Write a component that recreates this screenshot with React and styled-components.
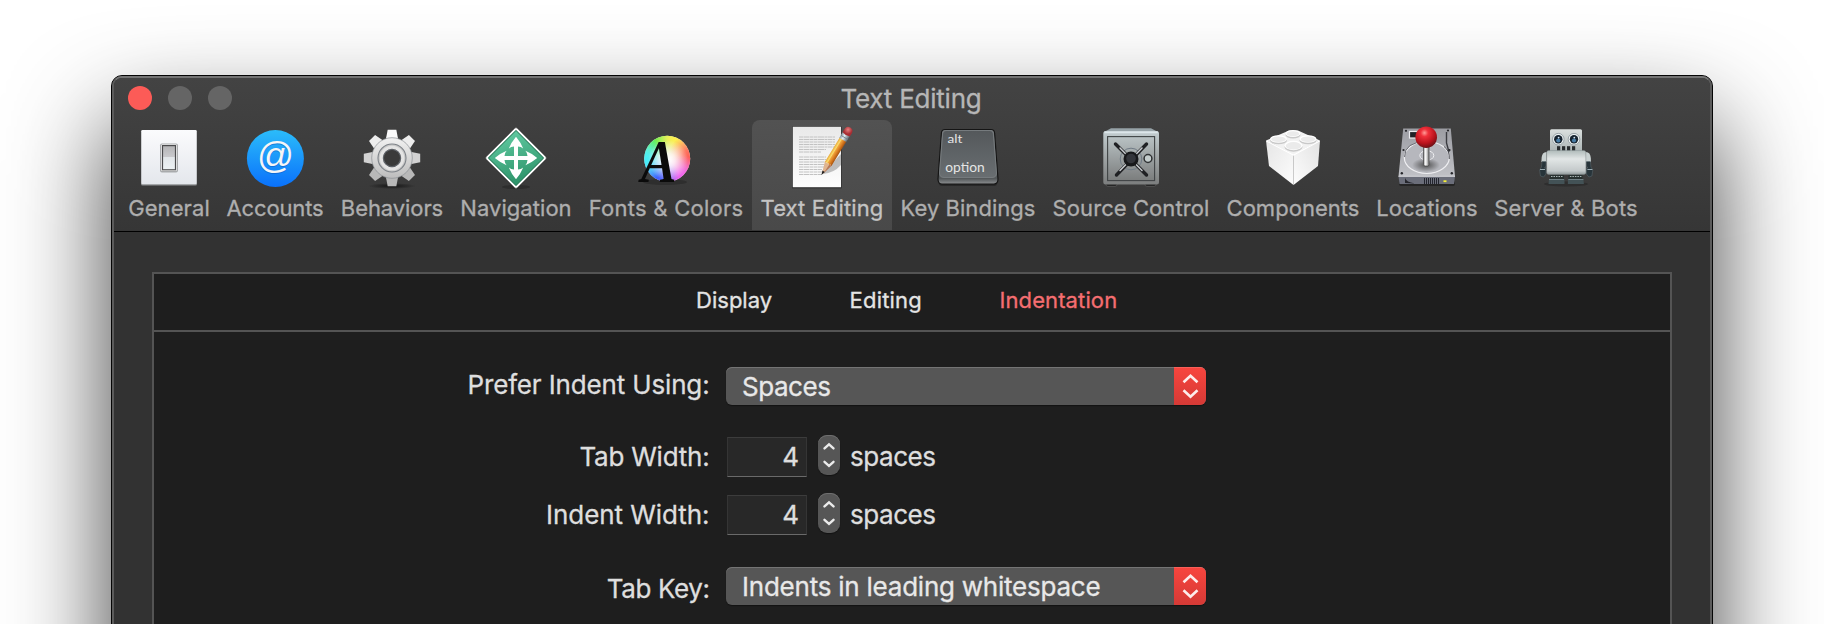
import React from 'react';
import styled, { createGlobalStyle } from 'styled-components';

const GlobalStyle = createGlobalStyle`
  *, *::before, *::after { box-sizing: border-box; }
  html, body { margin: 0; background: #fff; overflow: hidden; }
  body { font-family: Inter, "Liberation Sans", sans-serif; }
`;

const Desktop = styled.div`
  width: 1824px;
  height: 624px;
  padding: 75px 111px 0;
  overflow: hidden;
  background: #fff;
`;

const Window = styled.div`
  height: 700px;
  border: 1px solid #050505;
  border-radius: 11px;
  background: #5c5c5c;
  box-shadow: 0 50px 100px rgba(0, 0, 0, 0.76);
  -webkit-text-stroke-width: 0.3px;
`;

const Frame = styled.div`
  height: 100%;
  border: 2px solid #5b5b5b;
  border-top-color: #747474;
  border-radius: 10px;
  overflow: hidden;
  background: #323232;
`;

const Header = styled.header`
  height: 154px;
  border-bottom: 1px solid #000;
  background: linear-gradient(#434343, #363636);
`;

const TitleBar = styled.div`
  display: grid;
  grid-template-columns: 1fr auto 1fr;
  height: 42px;
  padding: 4px 16px 0 14px;
`;

const Lights = styled.div`
  display: flex;
  gap: 16px;
  padding-top: 4px;
`;

const Light = styled.span`
  width: 24px;
  height: 24px;
  border-radius: 50%;
  background: ${(p) => p.$color};
`;

const Title = styled.h1`
  margin: 0;
  padding-top: 1px;
  font-size: 26px;
  line-height: 32px;
  font-weight: 400;
  letter-spacing: -0.22px;
  color: #b6b6b6;
`;

const Toolbar = styled.nav`
  display: flex;
  padding-left: 6px;
`;

const Tool = styled.button`
  display: flex;
  flex-direction: column;
  align-items: center;
  flex: none;
  width: ${(p) => p.$width}px;
  height: 110px;
  padding: 4px 0 0;
  border: 0;
  border-radius: 8px 8px 0 0;
  background: ${(p) => (p.$active ? 'linear-gradient(#525252, #494949)' : 'none')};
  color: ${(p) => (p.$active ? '#c4c4c4' : '#aeaeae')};
  font: inherit;
`;

const ToolLabel = styled.span`
  margin-top: 7px;
  font-size: 22px;
  line-height: 26px;
  letter-spacing: ${(p) => p.$spacing}px;
  white-space: nowrap;
`;

const Icon = styled.svg`
  display: block;
  flex: none;
  width: 64px;
  height: 64px;
  overflow: visible;
  -webkit-text-stroke-width: 0;
`;

const Body = styled.main`
  padding: 40px 38px;
`;

const Panel = styled.section`
  height: 500px;
  border: 2px solid #545454;
  background: #1e1e1e;
`;

const Tabs = styled.div`
  display: flex;
  gap: 77.4px;
  height: 58px;
  padding: 13px 0 0 542px;
  border-bottom: 2px solid #545454;
`;

const Tab = styled.span`
  font-size: 22px;
  line-height: 26px;
  letter-spacing: ${(p) => p.$spacing}px;
  color: ${(p) => (p.$active ? '#f56e71' : '#e4e4e4')};
`;

const Form = styled.div`
  padding-top: 35px;
`;

const Row = styled.div`
  display: grid;
  grid-template-columns: 555.5px auto;
  column-gap: 16.5px;
  justify-content: start;
  height: ${(p) => p.$height}px;
  margin-bottom: ${(p) => p.$after || 0}px;
`;

const Label = styled.label`
  padding-top: ${(p) => p.$drop}px;
  text-align: right;
  font-size: 26px;
  line-height: 32px;
  letter-spacing: ${(p) => p.$spacing}px;
  color: #dedede;
`;

const Select = styled.div`
  display: flex;
  justify-content: space-between;
  width: 480px;
  height: 38px;
  border-radius: 6px;
  overflow: hidden;
  background: #565656;
  box-shadow: inset 0 1px 0 #747474, 0 1px 1px rgba(0, 0, 0, 0.4);
`;

const SelectValue = styled.span`
  padding: 4px 0 0 16px;
  font-size: 26px;
  line-height: 32px;
  letter-spacing: ${(p) => p.$spacing}px;
  color: #e8e8e8;
`;

const SelectArrows = styled.span`
  width: 32px;
  height: 38px;
  background: linear-gradient(#f8453e, #d53a36);
  box-shadow: inset 0 1px 0 rgba(255, 255, 255, 0.14);
`;

const Glyph = styled.svg`
  display: block;
`;

const NumberGroup = styled.div`
  display: flex;
  align-items: flex-start;
`;

const NumberField = styled.span`
  width: 80px;
  height: 40px;
  margin: 2px 11px 0 1px;
  padding: 3px 7px 0 0;
  border: 1px solid #353535;
  border-top-color: #3c3c3c;
  border-bottom-color: #6a6a6a;
  background: #282828;
  color: #dedede;
  font-size: 26px;
  line-height: 32px;
  text-align: right;
`;

const Stepper = styled.span`
  width: 22px;
  height: 40px;
  border-radius: 9px;
  background: #565656;
  box-shadow: inset 0 1px 0 #6e6e6e, 0 1px 1px rgba(0, 0, 0, 0.4);
`;

const Unit = styled.span`
  margin-left: 10px;
  padding-top: 6px;
  font-size: 26px;
  line-height: 32px;
  letter-spacing: -0.44px;
  color: #dedede;
`;

const GeneralIcon = () => (
  <Icon viewBox="0 0 64 64">
    <defs>
      <linearGradient id="plate" x2="0" y2="1">
        <stop offset="0" stopColor="#fbfbfd" />
        <stop offset="1" stopColor="#e4e7ec" />
      </linearGradient>
      <linearGradient id="rocker" x2="0" y2="1">
        <stop offset="0" stopColor="#b4b4b6" />
        <stop offset=".46" stopColor="#c9c9cc" />
        <stop offset=".48" stopColor="#e2e6e9" />
        <stop offset="1" stopColor="#edf2f4" />
      </linearGradient>
    </defs>
    <rect x="4" y="6" width="56" height="55.4" rx="1.5" fill="#8f9193" />
    <rect x="4.4" y="6" width="55.2" height="54.2" rx="1.2" fill="url(#plate)" />
    <rect x="23" y="19.5" width="18" height="29" rx="2" fill="#a9abad" />
    <rect x="24.2" y="20.4" width="15.6" height="26.6" rx="1" fill="#fff" />
    <rect x="25.5" y="21.6" width="13" height="24.2" fill="url(#rocker)" stroke="#4b4b4d" strokeWidth="1.2" />
  </Icon>
);

const AccountsIcon = () => (
  <Icon viewBox="0 0 64 64">
    <defs>
      <linearGradient id="at" x2="0" y2="1">
        <stop offset="0" stopColor="#2bbcfa" />
        <stop offset="1" stopColor="#0a71fb" />
      </linearGradient>
    </defs>
    <circle cx="32.4" cy="34.5" r="28.5" fill="url(#at)" />
    <text x="32.6" y="45.2" textAnchor="middle" fontFamily="Liberation Sans, sans-serif" fontSize="36.5" fill="#0a55b8" opacity=".5">@</text>
    <text x="32.6" y="44.2" textAnchor="middle" fontFamily="Liberation Sans, sans-serif" fontSize="36.5" fill="#f6f6f6">@</text>
  </Icon>
);

const BehaviorsIcon = () => (
  <Icon viewBox="0 0 64 64">
    <defs>
      <linearGradient id="gear" gradientUnits="userSpaceOnUse" x1="0" y1="-28" x2="0" y2="28">
        <stop offset="0" stopColor="#fbfbfb" />
        <stop offset="1" stopColor="#b3b3b3" />
      </linearGradient>
      <radialGradient id="gearShadow">
        <stop offset="0" stopColor="#111" stopOpacity=".9" />
        <stop offset="1" stopColor="#111" stopOpacity="0" />
      </radialGradient>
    </defs>
    <ellipse cx="32" cy="62" rx="24" ry="3" fill="url(#gearShadow)" />
    <g transform="translate(32 34)">
      <g>
        {[[0, '#fafafa'], [45, '#ededed'], [315, '#ededed'], [90, '#d2d2d2'], [270, '#d2d2d2'], [135, '#b8b8b8'], [225, '#b8b8b8'], [180, '#b9b9b9']].map(([a, fill]) => (
          <path key={a} transform={`rotate(${a})`} d="M-6.5-17L-4.3-28.2H4.3L6.5-17z" fill={fill} />
        ))}
      </g>
      <circle r="20.3" fill="url(#gear)" stroke="#8b8f94" strokeWidth=".7" />
      <circle r="14" fill="#c9c9c9" stroke="#7d8288" strokeWidth="1.1" />
      <circle r="10.8" fill="none" stroke="#e4e4e4" strokeWidth="3" />
      <circle r="8.6" fill="#3a3a3a" stroke="#5c6066" strokeWidth="1.2" />
    </g>
  </Icon>
);

const NavigationIcon = () => (
  <Icon viewBox="0 0 64 64">
    <defs>
      <linearGradient id="sign" gradientUnits="userSpaceOnUse" x1="-8" y1="-26" x2="8" y2="26">
        <stop offset="0" stopColor="#5fc9a0" />
        <stop offset="1" stopColor="#2c9168" />
      </linearGradient>
    </defs>
    <ellipse cx="32" cy="63" rx="14" ry="2" fill="#222" opacity=".5" />
    <g transform="translate(32 34)">
      <rect x="-22" y="-22" width="44" height="44" rx="2" transform="rotate(45)" fill="#fff" stroke="#222" strokeWidth=".5" />
      <rect x="-20" y="-20" width="40" height="40" rx="1" transform="rotate(45)" fill="#2b7d5c" />
      <path d="M0-27L27 0L0 27L-27 0z" fill="url(#sign)" />
      {[0, 90, 180, 270].map((a) => (
        <path key={a} transform={`rotate(${a})`} d="M-2 1V-11.5Q-5-11.3-7.2-9.4Q-4.8-15.5 0-21.2Q4.8-15.5 7.2-9.4Q5-11.3 2-11.5V1z" fill="#fff" />
      ))}
    </g>
  </Icon>
);

const wheel = [
  ['green', 22, 16, '#58f04c'],
  ['yellow', 42, 14, '#fff04a'],
  ['red', 57, 33, '#ff5a4c'],
  ['magenta', 47, 54, '#f05cf0'],
  ['blue', 22, 54, '#3c58ff'],
  ['cyan', 10, 36, '#3cf0f8'],
];

const FontsIcon = () => (
  <Icon viewBox="0 0 64 64">
    <defs>
      {wheel.map(([name, cx, cy, color]) => (
        <radialGradient key={name} id={name} gradientUnits="userSpaceOnUse" cx={cx} cy={cy} r="23">
          <stop offset="0" stopColor={color} />
          <stop offset=".35" stopColor={color} stopOpacity=".8" />
          <stop offset="1" stopColor={color} stopOpacity="0" />
        </radialGradient>
      ))}
      <radialGradient id="core">
        <stop offset="0" stopColor="#fff" />
        <stop offset=".35" stopColor="#fff" stopOpacity=".75" />
        <stop offset="1" stopColor="#fff" stopOpacity="0" />
      </radialGradient>
    </defs>
    <ellipse cx="31" cy="58" rx="22" ry="3" fill="#222" opacity=".5" />
    <circle cx="33.2" cy="34.8" r="23" fill="#f4e6e8" />
    {wheel.map(([name]) => (
      <circle key={name} cx="33.2" cy="34.8" r="23" fill={`url(#${name})`} />
    ))}
    <circle cx="34" cy="36" r="20" fill="url(#core)" />
    <text x="7" y="58" fontFamily="Liberation Serif, serif" fontWeight="700" fontStyle="italic" fontSize="61" textLength="35.5" lengthAdjust="spacingAndGlyphs" fill="#0b0b0b">A</text>
  </Icon>
);

const paperLines = [13, 15.5, 18, 20.5, 23, 25.5, 28, 33, 35.5, 38, 40.5, 43, 45.5, 48, 50.5];

const TextEditingIcon = () => (
  <Icon viewBox="0 0 64 64">
    <defs>
      <linearGradient id="paper" x2="0" y2="1">
        <stop offset="0" stopColor="#e9e9e9" />
        <stop offset="1" stopColor="#fdfdfd" />
      </linearGradient>
      <linearGradient id="pencil" x2="1" y2="0">
        <stop offset="0" stopColor="#e8a93a" />
        <stop offset=".3" stopColor="#fbdc6c" />
        <stop offset=".42" stopColor="#f0a43c" />
        <stop offset=".7" stopColor="#d87a20" />
        <stop offset="1" stopColor="#a4520f" />
      </linearGradient>
      <linearGradient id="ferrule" x2="1" y2="0">
        <stop offset="0" stopColor="#8a9aa4" />
        <stop offset=".4" stopColor="#e4eef3" />
        <stop offset="1" stopColor="#5f6c75" />
      </linearGradient>
      <radialGradient id="rubber" cx=".4" cy=".35">
        <stop offset="0" stopColor="#e98080" />
        <stop offset="1" stopColor="#a72e33" />
      </radialGradient>
    </defs>
    <rect x="2" y="2.4" width="49.8" height="62" fill="#222" opacity=".6" />
    <rect x="2.8" y="2.8" width="48.2" height="60.4" fill="url(#paper)" />
    {paperLines.map((y) => (
      <line key={y} x1="9" x2={y === 28 ? 31 : y > 45 ? 32 : y > 25 ? 36 : 45} y1={y} y2={y} stroke="#c2c2c2" strokeWidth="1" strokeDasharray="4 .5 6 .5 3 .5" />
    ))}
    <path d="M33 50L48 33L51 30V41Q44 49 33 50z" fill="#777" opacity=".45" />
    <g transform="translate(31.7 50.5) rotate(31.4)">
      <path d="M0 0L-3.900-12.500H3.900z" fill="#e0b48f" />
      <path d="M.9-1L1.400-12.500H3.900z" fill="#b5795a" />
      <path d="M0 .5L-1.400-3.800H1.400z" fill="#222" />
      <path d="M-3.900-12Q-2.600-14-1.300-12Q0-14 1.300-12Q2.600-14 3.900-12V-41H-3.900z" fill="url(#pencil)" />
      <rect x="-4.100" y="-47.500" width="8.200" height="7" fill="url(#ferrule)" />
      <path d="M-4.100-43.500H4.100" stroke="#6f7d87" strokeWidth=".8" />
      <path d="M-4.200-47V-51Q-4-55 0-55Q4-55 4.200-51V-47Q0-45.500-4.200-47z" fill="url(#rubber)" />
    </g>
  </Icon>
);

const KeyBindingsIcon = () => (
  <Icon viewBox="0 0 64 64">
    <defs>
      <linearGradient id="keySide" x2="0" y2="1">
        <stop offset="0" stopColor="#75797c" />
        <stop offset=".9" stopColor="#54585a" />
        <stop offset="1" stopColor="#8d9092" />
      </linearGradient>
      <linearGradient id="keyTop" x2="0" y2="1">
        <stop offset="0" stopColor="#54585b" />
        <stop offset="1" stopColor="#696e71" />
      </linearGradient>
    </defs>
    <rect x="3" y="56" width="58" height="6" rx="3" fill="#1c1c1c" opacity=".6" />
    <path d="M9 5.500H55Q58.300 5.500 58.600 9L62 55Q62 60 58 60H6Q2 60 2 55L5.400 9Q5.700 5.500 9 5.500z" fill="url(#keySide)" stroke="#151515" strokeWidth="1.200" />
    <path d="M10 6.500H54Q57 6.500 57.300 9.500L60.500 49Q60.500 53.500 56 53.500H8Q3.500 53.500 3.500 49L6.700 9.500Q7 6.500 10 6.500z" fill="url(#keyTop)" stroke="#7b8083" strokeWidth=".8" />
    <text x="11.500" y="18.700" fontFamily="Lato, sans-serif" fontSize="11.500" textLength="14.800" lengthAdjust="spacingAndGlyphs" fill="#e4e4e4">alt</text>
    <text x="9.300" y="48" fontFamily="Lato, sans-serif" fontSize="12.500" textLength="39.500" lengthAdjust="spacingAndGlyphs" fill="#e4e4e4">option</text>
  </Icon>
);

const SourceControlIcon = () => (
  <Icon viewBox="0 0 64 64">
    <defs>
      <linearGradient id="safe" x2="0" y2="1">
        <stop offset="0" stopColor="#c3ced1" />
        <stop offset=".5" stopColor="#9fa4a5" />
        <stop offset="1" stopColor="#7c7e7e" />
      </linearGradient>
      <linearGradient id="door" x2="0" y2="1">
        <stop offset="0" stopColor="#b9c2c4" />
        <stop offset="1" stopColor="#7b7d7d" />
      </linearGradient>
    </defs>
    <rect x="7" y="58" width="11" height="4.500" rx="2" fill="#262626" stroke="#606060" strokeWidth=".6" />
    <rect x="46" y="58" width="11" height="4.500" rx="2" fill="#262626" stroke="#606060" strokeWidth=".6" />
    <path d="M12 4.300H52L59 8H5z" fill="#97a3a8" />
    <rect x="4.300" y="7" width="55.700" height="53.500" rx="2.500" fill="url(#safe)" />
    <path d="M5.500 8.300H58.800" stroke="#dce6ea" strokeWidth="1.800" />
    <rect x="8.600" y="12.600" width="47" height="44" fill="url(#door)" stroke="#404446" strokeWidth="1.100" />
    <circle cx="32" cy="35" r="10.800" fill="none" stroke="#707b86" strokeWidth="1" />
    <g strokeLinecap="round">
      <path d="M16.500 20L47.500 51M47.500 20L17.500 51" stroke="#202124" strokeWidth="3.400" />
      <path d="M21 24L43 46.500M43 24L21 46.500" stroke="#c7cbcf" strokeWidth="1.500" />
    </g>
    <circle cx="32" cy="35" r="7.500" fill="#17181b" />
    <circle cx="32" cy="34.500" r="4.800" fill="#33353b" />
    <circle cx="49" cy="34.500" r="3.900" fill="#c3cccc" stroke="#303335" strokeWidth="1.500" />
  </Icon>
);

const ComponentsIcon = () => (
  <Icon viewBox="0 0 64 64">
    <defs>
      <linearGradient id="brickL" x2="1" y2="1">
        <stop offset="0" stopColor="#e6e6e6" />
        <stop offset="1" stopColor="#fcfcfc" />
      </linearGradient>
      <linearGradient id="brickR" x1="1" x2="0" y2="1">
        <stop offset="0" stopColor="#e2e2e2" />
        <stop offset="1" stopColor="#fdfdfd" />
      </linearGradient>
    </defs>
    <path d="M5 16.500L28 6.500H37L59 16.500L32.500 31z" fill="#f2f2f2" />
    <path d="M5 16.500L32.500 30.500V61L8 42z" fill="url(#brickL)" />
    <path d="M59 16.500L32.500 30.500V61L57 42z" fill="url(#brickR)" />
    <path d="M5.500 17L32.500 31L58.500 17" fill="none" stroke="#fff" strokeWidth="1.200" />
    {[[32, 9.5, 7.5, 3.5], [17.5, 15, 8.5, 3.8], [47, 15, 8.5, 3.8], [32.5, 21.5, 9, 4.7]].map(([x, y, rx, ry]) => (
      <g key={x + y}>
        <ellipse cx={x} cy={y + 1.5} rx={rx} ry={ry} fill="#c9c9c9" />
        <ellipse cx={x} cy={y} rx={rx} ry={ry} fill="#fff" />
        <ellipse cx={x} cy={y + 0.3} rx={rx - 1.2} ry={ry - 1} fill="#ebebeb" />
      </g>
    ))}
  </Icon>
);

const LocationsIcon = () => (
  <Icon viewBox="0 0 64 64">
    <defs>
      <linearGradient id="drive" x2="0" y2="1">
        <stop offset="0" stopColor="#9c9da3" />
        <stop offset="1" stopColor="#c0c1c6" />
      </linearGradient>
      <radialGradient id="ball" cx=".42" cy=".3" r=".7">
        <stop offset="0" stopColor="#ff9c98" />
        <stop offset=".25" stopColor="#f0303a" />
        <stop offset=".7" stopColor="#b9121c" />
        <stop offset="1" stopColor="#6d1015" />
      </radialGradient>
      <radialGradient id="stickShadow">
        <stop offset="0" stopColor="#444" stopOpacity=".9" />
        <stop offset="1" stopColor="#444" stopOpacity="0" />
      </radialGradient>
      <linearGradient id="stick" x2="1" y2="0">
        <stop offset="0" stopColor="#999" />
        <stop offset=".4" stopColor="#fff" />
        <stop offset="1" stopColor="#777" />
      </linearGradient>
    </defs>
    <rect x="4" y="57" width="56" height="5" rx="2" fill="#1c1c1c" opacity=".7" />
    <path d="M8.200 4.500H55.800L60 52.500H3.500z" fill="url(#drive)" />
    <path d="M3.500 52H60L59 60H4.500z" fill="#6b6e7a" />
    <path d="M3.500 52.300H60" stroke="#dcdce0" strokeWidth="1" />
    <path d="M10 54V59L20 59.500Q11 58 10 54z" fill="#25262c" />
    <path d="M29.500 54V60M31.500 54V60M33.500 54V60M35.500 54V60M37.500 54V60M39.500 54V60M41.500 54V60M43.500 54V60" stroke="#23252e" strokeWidth="1" />
    <rect x="48.500" y="56.300" width="3" height="1.800" fill="#f5ef38" />
    <ellipse cx="31.800" cy="33.500" rx="22.500" ry="16" fill="#b6b7bd" stroke="#efeff2" strokeWidth="1.200" />
    <path d="M9.500 33Q9.500 18 31 17.500" fill="none" stroke="#6d6e74" strokeWidth="1" />
    <path d="M54.300 35Q55 27 49 22.500" fill="none" stroke="#55565c" strokeWidth="1" />
    <ellipse cx="31.800" cy="31.500" rx="7" ry="4.800" fill="none" stroke="#efeff2" strokeWidth="1" />
    <ellipse cx="31" cy="41" rx="14" ry="7" fill="url(#stickShadow)" />
    <rect x="14.500" y="7.500" width="8" height="6.500" fill="#202126" stroke="#ececef" strokeWidth="1.200" />
    <path d="M51.500 8V19L54 28" fill="none" stroke="#3a3b40" strokeWidth="1.400" />
    <g fill="#26272b">
      <circle cx="11" cy="6.800" r="1.100" />
      <circle cx="53" cy="6.500" r="1.100" />
      <circle cx="8.500" cy="26" r="1.100" />
      <circle cx="54.500" cy="26" r="1.100" />
      <circle cx="6.800" cy="49.300" r="1.200" />
      <circle cx="56.800" cy="49.300" r="1.200" />
    </g>
    <rect x="28.500" y="22" width="5.500" height="20" rx="1.500" fill="url(#stick)" stroke="#444" strokeWidth=".7" />
    <circle cx="31.200" cy="13.200" r="10.800" fill="url(#ball)" />
  </Icon>
);

const BotsIcon = () => (
  <Icon viewBox="0 0 64 64">
    <defs>
      <linearGradient id="botHead" x2="0" y2="1">
        <stop offset="0" stopColor="#dbe0df" />
        <stop offset="1" stopColor="#a9b2b2" />
      </linearGradient>
      <linearGradient id="botBody" x2="0" y2="1">
        <stop offset="0" stopColor="#b0bbba" />
        <stop offset=".35" stopColor="#e2e6e6" />
        <stop offset=".85" stopColor="#c3c9ca" />
        <stop offset="1" stopColor="#8f9899" />
      </linearGradient>
    </defs>
    <ellipse cx="32" cy="60" rx="22" ry="2.500" fill="#222" opacity=".5" />
    <rect x="16" y="5.200" width="32" height="23.500" rx="1.500" fill="url(#botHead)" />
    {[24.3, 40].map((x) => (
      <g key={x}>
        <circle cx={x} cy="15.200" r="5.800" fill="#edf2f2" stroke="#89949a" strokeWidth=".8" />
        <circle cx={x} cy="15.200" r="4.200" fill="#16232f" />
        <circle cx={x} cy="16.500" r="2.100" fill="#467ba4" />
        <circle cx={x + 0.3} cy="13.600" r=".9" fill="#d4e6f5" />
      </g>
    ))}
    {[23, 28, 33, 38].map((x) => (
      <rect key={x} x={x} y="22.200" width="3.200" height="4.600" fill="#282c2e" />
    ))}
    {[0, 1].map((side) => (
      <g key={side} transform={side ? 'translate(64.400 0) scale(-1 1)' : undefined}>
        <path d="M12.500 28Q8 28 7.600 34L7.400 38H12.500z" fill="#c9d1d1" />
        <path d="M8 37.500H12V42L10.500 44H12V50L9.500 53L6.500 52L5.600 46L7.500 43z" fill="#27343a" stroke="#5d6b71" strokeWidth=".5" />
        <path d="M6 45.500H11" stroke="#9babb2" strokeWidth="1.200" />
        <rect x="16" y="51" width="14" height="4" fill="#26302f" />
        <path d="M17 52.500H29" stroke="#a9b4b4" strokeWidth="1.200" strokeDasharray="1.500 1" />
        <path d="M15 55H30.500V60H14.500z" fill="#435256" />
        <path d="M15 55.500H30" stroke="#7d8d92" strokeWidth=".8" />
      </g>
    ))}
    <rect x="12.700" y="26.500" width="39.200" height="24" rx="2" fill="url(#botBody)" stroke="#7f898a" strokeWidth=".4" />
  </Icon>
);

const tools = [
  { label: 'General', width: 98, spacing: 0.1, Art: GeneralIcon },
  { label: 'Accounts', width: 114, spacing: -0.12, Art: AccountsIcon },
  { label: 'Behaviors', width: 120, spacing: -0.08, Art: BehaviorsIcon },
  { label: 'Navigation', width: 128, spacing: 0.05, Art: NavigationIcon },
  { label: 'Fonts & Colors', width: 172, spacing: 0.25, Art: FontsIcon },
  { label: 'Text Editing', width: 140, spacing: 0.1, Art: TextEditingIcon, active: true },
  { label: 'Key Bindings', width: 152, spacing: 0.04, Art: KeyBindingsIcon },
  { label: 'Source Control', width: 174, spacing: 0.08, Art: SourceControlIcon },
  { label: 'Components', width: 150, spacing: 0.03, Art: ComponentsIcon },
  { label: 'Locations', width: 118, spacing: 0.03, Art: LocationsIcon },
  { label: 'Server & Bots', width: 160, spacing: 0.18, Art: BotsIcon },
];

const PopUp = ({ children, spacing }) => (
  <Select>
    <SelectValue $spacing={spacing}>{children}</SelectValue>
    <SelectArrows>
      <Glyph width="32" height="38" fill="none" stroke="#fdeceb" strokeWidth="2.600">
        <path d="M9.500 15.200L16.500 8.700L23.500 15.200M9.500 23.300L16.500 29.800L23.500 23.300" />
      </Glyph>
    </SelectArrows>
  </Select>
);

const NumberInput = ({ value }) => (
  <NumberGroup>
    <NumberField>{value}</NumberField>
    <Stepper>
      <Glyph width="22" height="40" fill="none" stroke="#ebebeb" strokeWidth="2.400" strokeLinecap="round">
        <path d="M6.500 13.400L11 9.300L15.500 13.400M6.500 26.800L11 30.900L15.500 26.800" />
      </Glyph>
    </Stepper>
    <Unit>spaces</Unit>
  </NumberGroup>
);

export default function App() {
  return (
    <>
      <GlobalStyle />
      <Desktop>
        <Window>
          <Frame>
            <Header>
              <TitleBar>
                <Lights>
                  <Light $color="#fc5b57" />
                  <Light $color="#656565" />
                  <Light $color="#656565" />
                </Lights>
                <Title>Text Editing</Title>
              </TitleBar>
              <Toolbar>
                {tools.map(({ label, width, spacing, Art, active }) => (
                  <Tool key={label} $width={width} $active={active}>
                    <Art />
                    <ToolLabel $spacing={spacing}>{label}</ToolLabel>
                  </Tool>
                ))}
              </Toolbar>
            </Header>
            <Body>
              <Panel>
                <Tabs>
                  <Tab $spacing={0.02}>Display</Tab>
                  <Tab $spacing={0.2}>Editing</Tab>
                  <Tab $spacing={0.12} $active>Indentation</Tab>
                </Tabs>
                <Form>
                  <Row $height={38} $after={30}>
                    <Label $drop={2} $spacing={-0.15}>Prefer Indent Using:</Label>
                    <PopUp spacing={-0.45}>Spaces</PopUp>
                  </Row>
                  <Row $height={42} $after={16}>
                    <Label $drop={6} $spacing={-0.22}>Tab Width:</Label>
                    <NumberInput value="4" />
                  </Row>
                  <Row $height={42} $after={32}>
                    <Label $drop={6} $spacing={-0.06}>Indent Width:</Label>
                    <NumberInput value="4" />
                  </Row>
                  <Row $height={38}>
                    <Label $drop={6} $spacing={-0.4}>Tab Key:</Label>
                    <PopUp spacing={-0.23}>Indents in leading whitespace</PopUp>
                  </Row>
                </Form>
              </Panel>
            </Body>
          </Frame>
        </Window>
      </Desktop>
    </>
  );
}
